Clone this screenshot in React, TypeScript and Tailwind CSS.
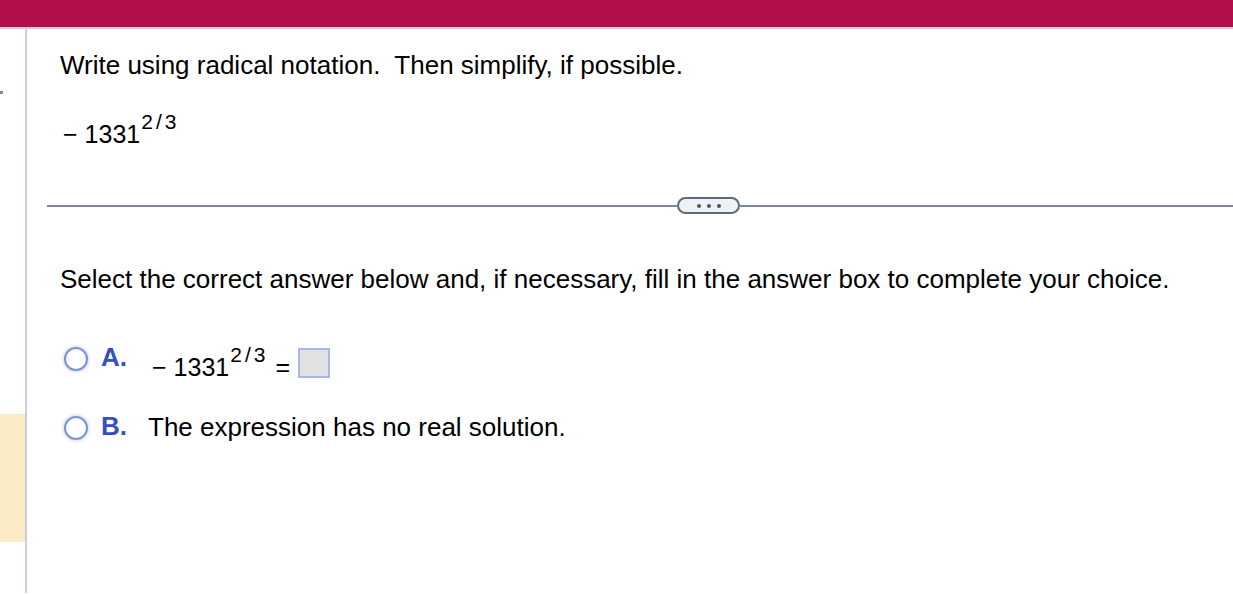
import React from "react";

function Expr() {
  return (
    <span className="whitespace-nowrap">
      <span>{"\u2212"}</span>
      <span className="ml-[7px]">1331</span>
      <span className="relative bottom-[14px] ml-[1px] text-[21px] leading-none tracking-[3px]">2/3</span>
    </span>
  );
}

function Radio() {
  return (
    <div className="h-[24px] w-[24px] rounded-full border-2 border-[#7d94d8] bg-white shadow-[0_0_3px_1px_rgba(125,148,216,0.35)]" />
  );
}

export default function App() {
  return (
    <div
      className="flex h-[594px] w-[1233px] flex-col overflow-hidden bg-white text-black"
      style={{ fontFamily: '"Liberation Sans", Arial, sans-serif' }}
    >
      <div className="h-[27px] shrink-0 bg-[#b20e49]" />
      <div className="h-[2px] shrink-0 bg-[#cdd3df]" />
      <div className="flex flex-1">
        <div className="flex w-[25px] shrink-0 flex-col">
          <div className="mt-[62px] h-[3px] w-[3px] bg-[#8a8a8a]" />
          <div className="mt-[320px] h-[128px] w-[25px] bg-[#fbebc4]" />
        </div>
        <div className="h-[564px] w-[2px] shrink-0 bg-[#c9cfdc]" />
        <div className="flex flex-1 flex-col">
          <div className="mt-[21px] pl-[33px] text-[26px] leading-[30px]">
            Write using radical notation.{"\u00a0 "}Then simplify, if possible.
          </div>
          <div className="mt-[39px] pl-[36px] text-[25px] leading-[30px]">
            <Expr />
          </div>
          <div className="ml-[20px] mt-[48px] flex items-center">
            <div className="h-[2px] w-[630px] bg-[#7d8898]" />
            <div className="flex h-[17px] w-[63px] shrink-0 items-center justify-center gap-[6px] rounded-full border-2 border-[#5d6a7a] bg-[#eff2f4]">
              <span className="h-[4px] w-[4px] rounded-full bg-[#4a5563]" />
              <span className="h-[4px] w-[4px] rounded-full bg-[#4a5563]" />
              <span className="h-[4px] w-[4px] rounded-full bg-[#4a5563]" />
            </div>
            <div className="h-[2px] flex-1 bg-[#7d8898]" />
          </div>
          <div className="mt-[50px] pl-[33px] text-[26px] leading-[30px]">
            Select the correct answer below and, if necessary, fill in the answer box to complete your choice.
          </div>
          <div className="mt-[46px] flex h-[42px] items-start">
            <div className="ml-[37px] mt-[7px]">
              <Radio />
            </div>
            <div className="ml-[13px] mt-[2px] text-[26px] font-bold leading-[30px] text-[#3450c0]">A.</div>
            <div className="ml-[25px] mt-[12px] text-[25px] leading-[30px]">
              <Expr />
            </div>
            <div className="ml-[7px] mt-[12px] text-[25px] leading-[30px]">=</div>
            <div className="ml-[8px] mt-[8px] h-[30px] w-[32px] border-2 border-[#a6b8ea] bg-[#e1e1e1]" />
          </div>
          <div className="mt-[29px] flex items-start">
            <div className="ml-[37px] mt-[5px]">
              <Radio />
            </div>
            <div className="ml-[13px] text-[26px] font-bold leading-[30px] text-[#3450c0]">B.</div>
            <div className="ml-[21px] mt-[1px] text-[26px] leading-[30px]">The expression has no real solution.</div>
          </div>
        </div>
      </div>
    </div>
  );
}
